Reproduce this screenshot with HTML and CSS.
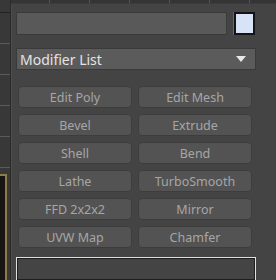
FILE: index.html
```html
<!DOCTYPE html>
<html lang="en">
<head>
  <meta charset="UTF-8">
  <title>Modify Panel</title>
  <link rel="stylesheet" href="styles.css">
</head>
<body>
  <div class="frame">
    <aside class="side">
      <div class="tick"></div>
      <div class="tick"></div>
      <div class="tick"></div>
      <div class="tick"></div>
      <div class="tick"></div>
      <div class="tick last"></div>
      <div class="viewport"></div>
    </aside>

    <main class="panel">
      <div class="tabs">
        <span class="tab"></span>
        <span class="tab"></span>
        <span class="tab"></span>
        <span class="tab"></span>
        <span class="tab"></span>
        <span class="tab"></span>
      </div>

      <div class="name-row">
        <input class="name" type="text" value="">
        <span class="swatch"></span>
      </div>

      <div class="dropdown">
        <span>Modifier List</span>
        <span class="arrow"></span>
      </div>

      <div class="buttons">
        <button>Edit Poly</button>
        <button>Edit Mesh</button>
        <button>Bevel</button>
        <button>Extrude</button>
        <button>Shell</button>
        <button>Bend</button>
        <button>Lathe</button>
        <button>TurboSmooth</button>
        <button>FFD 2x2x2</button>
        <button>Mirror</button>
        <button>UVW Map</button>
        <button>Chamfer</button>
      </div>

      <div class="stack"></div>
    </main>
  </div>
</body>
</html>
```

FILE: styles.css
```css
html, body {
  margin: 0;
  padding: 0;
}
body {
  width: 276px;
  height: 280px;
  overflow: hidden;
  background: #444444;
  font-family: "Noto Sans", "DejaVu Sans", sans-serif;
}
.frame {
  display: flex;
  height: 280px;
}
.side {
  width: 10px;
  flex: none;
  background: #383838;
  border-right: 1px solid #2b2b2b;
  box-shadow: 1px 0 0 #4c4c4c;
  display: flex;
  flex-direction: column;
  padding-top: 12px;
}
.tick {
  height: 30px;
  border-top: 1px solid #5a5a5a;
  flex: none;
}
.tick:first-child {
  border-top-color: #222;
}
.tick.last {
  height: 6px;
}
.viewport {
  flex: 1;
  background: #181614;
  border: 2px solid #8c7c45;
  border-left: none;
  border-bottom: none;
  margin-right: 3px;
}
.panel {
  flex: 1;
  padding-left: 5px;
  display: flex;
  flex-direction: column;
}
.tabs {
  height: 3px;
  margin-left: -5px;
  display: flex;
  background: #353535;
  border-bottom: 1px solid #3c3c3c;
}
.tab {
  width: 39px;
  border-right: 1px solid #555;
}
.tab:first-child {
  width: 38px;
}
.name-row {
  display: flex;
  gap: 7px;
  margin-top: 8px;
}
.name {
  width: 211px;
  height: 23px;
  box-sizing: border-box;
  margin: 0;
  padding: 0 3px;
  background: #595959;
  border: 1px solid #3a3a3a;
  outline: none;
}
.swatch {
  width: 21px;
  height: 23px;
  box-sizing: border-box;
  background: #d7e3f7;
  border: 2px solid #141414;
  box-shadow: -1px 0 0 #666;
}
.dropdown {
  width: 240px;
  height: 22px;
  box-sizing: border-box;
  margin-top: 13px;
  background: #5b5b5b;
  border: 1px solid #3a3a3a;
  color: #e4e4e4;
  font-size: 14px;
  display: flex;
  align-items: center;
  justify-content: space-between;
  padding: 0 9px 0 3px;
}
.arrow {
  width: 0;
  height: 0;
  border-left: 5px solid transparent;
  border-right: 5px solid transparent;
  border-top: 6px solid #e8e8e8;
}
.buttons {
  display: grid;
  grid-template-columns: 114px 114px;
  grid-auto-rows: 22px;
  gap: 6px;
  margin-top: 16px;
  padding-left: 2px;
}
.buttons button {
  margin: 0;
  padding: 0;
  background: #535353;
  border: 1px solid #3d3d3d;
  border-radius: 4px;
  color: #a6a6a6;
  font-family: "Noto Sans", "DejaVu Sans", sans-serif;
  font-size: 12.5px;
  cursor: pointer;
}
.stack {
  width: 240px;
  margin-top: 9px;
  flex: 1;
  box-sizing: border-box;
  border: 1px solid #e0e0e0;
  box-shadow: inset 0 0 0 1px #1e1e1e;
  border-bottom: none;
}
```
